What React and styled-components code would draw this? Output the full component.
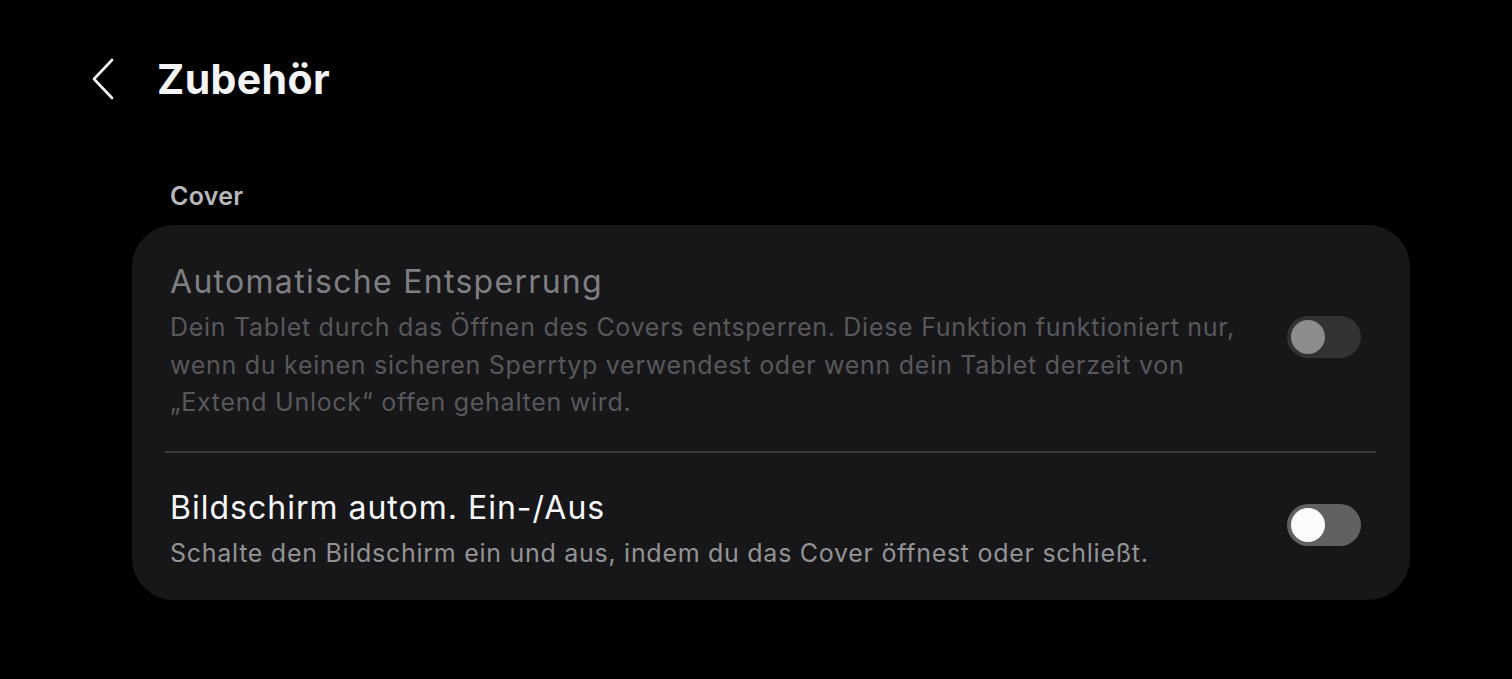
import React from 'react'
import styled, { createGlobalStyle } from 'styled-components'

const GlobalStyle = createGlobalStyle`
  html, body {
    margin: 0;
    background: #000;
  }
  body {
    font-family: Inter, "Noto Sans", sans-serif;
    -webkit-font-smoothing: antialiased;
  }
`

const Page = styled.div`
  width: 1512px;
  height: 679px;
  background: #000;
  overflow: hidden;
`

const Header = styled.header`
  display: flex;
  align-items: center;
  height: 80px;
  padding: 39px 0 0 84px;
  gap: 35px;
`

const BackButton = styled.button`
  display: flex;
  align-items: center;
  justify-content: center;
  width: 38px;
  height: 44px;
  padding: 0;
  border: none;
  background: none;
  cursor: pointer;
`

const Title = styled.h1`
  margin: 0;
  font-size: 41px;
  font-weight: 700;
  color: #f4f4f6;
  letter-spacing: 0.4px;
`

const Section = styled.section`
  padding: 62px 0 0 132px;
  width: 1278px;
`

const SectionLabel = styled.h2`
  margin: 0 0 14px 38px;
  font-size: 25px;
  font-weight: 600;
  color: #b8b8bc;
  line-height: 30px;
  letter-spacing: 0.3px;
`

const Card = styled.div`
  background: #171719;
  border-radius: 42px;
  padding: 0 34px 0 33px;
`

const Row = styled.div`
  display: flex;
  align-items: center;
  gap: 34px;
  padding: ${({ $pad }) => $pad};
`

const RowText = styled.div`
  flex: 1;
  padding-left: 5px;
`

const RowTitle = styled.div`
  font-size: 32px;
  line-height: 40px;
  margin-bottom: 7px;
  color: ${({ $disabled }) => ($disabled ? '#7f7f82' : '#f7f7f9')};
  letter-spacing: ${({ $disabled }) => ($disabled ? '1.3px' : '1px')};
`

const RowDesc = styled.div`
  font-size: 25px;
  line-height: 37.5px;
  color: ${({ $disabled }) => ($disabled ? '#58585b' : '#939396')};
  letter-spacing: 0.72px;
`

const Divider = styled.hr`
  margin: 0;
  border: none;
  height: 2px;
  background: #3a3a3d;
`

const Track = styled.div`
  flex: none;
  width: 74px;
  height: 42px;
  border-radius: 21px;
  margin: 0 15px 10px 0;
  background: ${({ $disabled }) => ($disabled ? '#323235' : '#616164')};
  display: flex;
  align-items: center;
  padding-left: 4px;
  box-sizing: border-box;
`

const Knob = styled.div`
  width: 34px;
  height: 34px;
  border-radius: 50%;
  background: ${({ $disabled }) => ($disabled ? '#8c8c8f' : '#fbfbfd')};
`

function Toggle({ disabled }) {
  return (
    <Track $disabled={disabled}>
      <Knob $disabled={disabled} />
    </Track>
  )
}

export default function App() {
  return (
    <Page>
      <GlobalStyle />
      <Header>
        <BackButton aria-label="Zurück">
          <svg width="26" height="42" viewBox="0 0 26 42" fill="none">
            <path d="M22 2 L4 21 L22 40" stroke="#f4f4f6" strokeWidth="2.6" strokeLinecap="round" strokeLinejoin="round" />
          </svg>
        </BackButton>
        <Title>Zubehör</Title>
      </Header>
      <Section>
        <SectionLabel>Cover</SectionLabel>
        <Card>
          <Row $pad="37px 0 29px">
            <RowText>
              <RowTitle $disabled>Automatische Entsperrung</RowTitle>
              <RowDesc $disabled>
                Dein Tablet durch das Öffnen des Covers entsperren. Diese Funktion funktioniert nur,
                wenn du keinen sicheren Sperrtyp verwendest oder wenn dein Tablet derzeit von
                „Extend Unlock“ offen gehalten wird.
              </RowDesc>
            </RowText>
            <Toggle disabled />
          </Row>
          <Divider />
          <Row $pad="35px 0 28px">
            <RowText>
              <RowTitle>Bildschirm autom. Ein-/Aus</RowTitle>
              <RowDesc>Schalte den Bildschirm ein und aus, indem du das Cover öffnest oder schließt.</RowDesc>
            </RowText>
            <Toggle />
          </Row>
        </Card>
      </Section>
    </Page>
  )
}
